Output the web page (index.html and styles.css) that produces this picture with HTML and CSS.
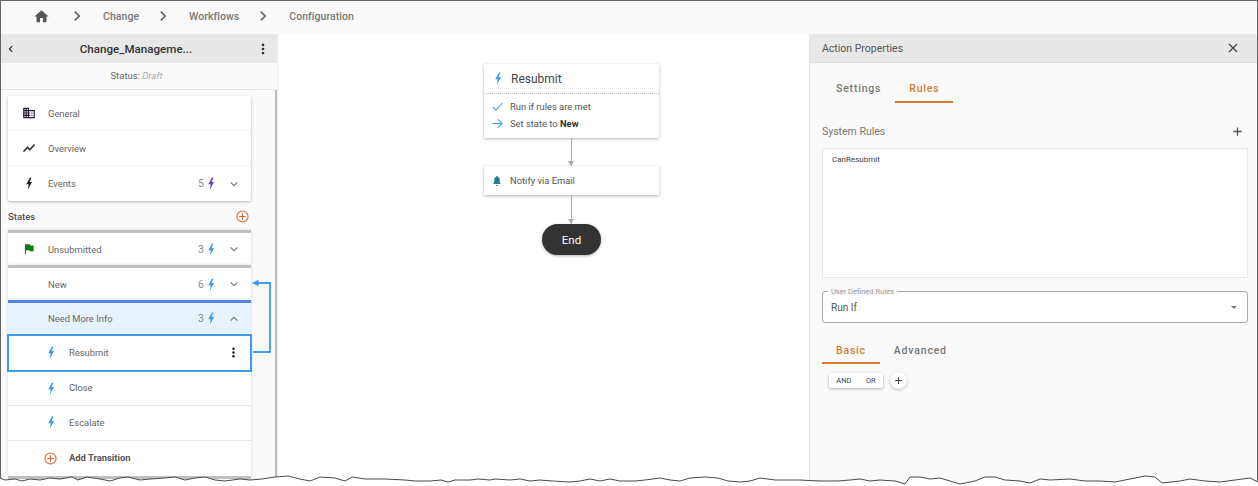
FILE: index.html
```html
<!DOCTYPE html>
<html lang="en">
<head>
<meta charset="utf-8">
<title>Workflow Configuration</title>
<link rel="stylesheet" href="styles.css">
</head>
<body>
<svg class="defs" width="0" height="0" aria-hidden="true">
  <symbol id="i-bolt" viewBox="0 0 12 20"><path d="M7.500 .8 1.800 11.200h3.700L4.300 19.500 10.600 7.800H6.900L9.800 .8z"/></symbol>
  <symbol id="i-home" viewBox="0 0 24 24"><path d="M10 20v-6h4v6h5v-8h3L12 3 2 12h3v8z"/></symbol>
  <symbol id="i-chev-r" viewBox="0 0 24 24"><path d="M8.600 5.400 7 7l5 5-5 5 1.600 1.600L15.200 12z"/></symbol>
  <symbol id="i-more" viewBox="0 0 24 24"><circle cx="12" cy="5" r="2.300"/><circle cx="12" cy="12" r="2.300"/><circle cx="12" cy="19" r="2.300"/></symbol>
  <symbol id="i-down" viewBox="0 0 12 12"><path d="M2 4l4 4 4-4" fill="none" stroke="currentColor" stroke-width="1.300"/></symbol>
  <symbol id="i-up" viewBox="0 0 12 12"><path d="M2 8l4-4 4 4" fill="none" stroke="currentColor" stroke-width="1.300"/></symbol>
  <symbol id="i-add" viewBox="0 0 14 14"><circle cx="7" cy="7" r="6" fill="none" stroke="currentColor" stroke-width="1.100"/><path d="M7 3.500v7M3.500 7h7" stroke="currentColor" stroke-width="1.100"/></symbol>
  <symbol id="i-plus" viewBox="0 0 12 12"><path d="M6 1.500v9M1.500 6h9" stroke="currentColor" stroke-width="1.400"/></symbol>
</svg>

<div class="frame">
  <nav class="crumbs">
    <svg class="home"><use href="#i-home"/></svg>
    <svg class="crumb-sep"><use href="#i-chev-r"/></svg>
    <span class="crumb">Change</span>
    <svg class="crumb-sep"><use href="#i-chev-r"/></svg>
    <span class="crumb">Workflows</span>
    <svg class="crumb-sep"><use href="#i-chev-r"/></svg>
    <span class="crumb">Configuration</span>
  </nav>

  <div class="main">
    <aside class="side">
      <header class="side-head">
        <svg class="back" viewBox="0 0 12 12"><path d="M7.500 2.500 4 6l3.500 3.500" fill="none" stroke="#333" stroke-width="1.500"/></svg>
        <span class="side-title">Change_Manageme...</span>
        <svg class="side-more"><use href="#i-more"/></svg>
      </header>
      <div class="status">Status:&nbsp;<em>Draft</em></div>
      <div class="side-body">
        <section class="card">
          <div class="row">
            <svg class="lead dark" viewBox="0 0 24 24"><path fill="#2a1a3a" d="M12 7V3H2v18h20V7H12zM6 19H4v-2h2v2zm0-4H4v-2h2v2zm0-4H4V9h2v2zm0-4H4V5h2v2zm4 12H8v-2h2v2zm0-4H8v-2h2v2zm0-4H8V9h2v2zm0-4H8V5h2v2zm10 12h-8v-2h2v-2h-2v-2h2v-2h-2V9h8v10zm-2-8h-2v2h2v-2zm0 4h-2v2h2v-2z"/></svg>
            <span class="label">General</span>
          </div>
          <div class="row">
            <svg class="lead dark trend" viewBox="0 0 24 24"><path d="M3.500 18.490l6-6.010 4 4L22 6.920l-1.410-1.410-7.090 7.970-4-4L2 16.990z"/></svg>
            <span class="label">Overview</span>
          </div>
          <div class="row">
            <svg class="lead bolt-lead dark"><use href="#i-bolt"/></svg>
            <span class="label">Events</span>
            <span class="count">5</span><svg class="bolt purple"><use href="#i-bolt"/></svg>
            <svg class="chev"><use href="#i-down"/></svg>
          </div>
        </section>

        <div class="states-head">
          <span>States</span>
          <svg class="add-state"><use href="#i-add"/></svg>
        </div>

        <section class="card state-card">
          <div class="row">
            <svg class="lead" viewBox="0 0 24 24"><path fill="#0b7d16" d="M14.400 6 14 4H5v17h2v-7h5.600l.4 2h7V6z"/></svg>
            <span class="label">Unsubmitted</span>
            <span class="count">3</span><svg class="bolt"><use href="#i-bolt"/></svg>
            <svg class="chev"><use href="#i-down"/></svg>
          </div>
        </section>
        <section class="card state-card">
          <div class="row">
            <span class="lead"></span>
            <span class="label">New</span>
            <span class="count">6</span><svg class="bolt"><use href="#i-bolt"/></svg>
            <svg class="chev"><use href="#i-down"/></svg>
          </div>
        </section>
        <section class="card state-card open">
          <div class="row open-row">
            <span class="lead"></span>
            <span class="label">Need More Info</span>
            <span class="count">3</span><svg class="bolt"><use href="#i-bolt"/></svg>
            <svg class="chev"><use href="#i-up"/></svg>
          </div>
          <div class="row sub selected">
            <svg class="bolt sub-bolt"><use href="#i-bolt"/></svg>
            <span class="label">Resubmit</span>
            <svg class="row-more"><use href="#i-more"/></svg>
          </div>
          <div class="row sub">
            <svg class="bolt sub-bolt"><use href="#i-bolt"/></svg>
            <span class="label">Close</span>
          </div>
          <div class="row sub">
            <svg class="bolt sub-bolt"><use href="#i-bolt"/></svg>
            <span class="label">Escalate</span>
          </div>
          <div class="row sub">
            <svg class="add-transition"><use href="#i-add"/></svg>
            <span class="label strong">Add Transition</span>
          </div>
        </section>
        <div class="card-end"></div>
      </div>
      <svg class="link-arrow" viewBox="0 0 20 76"><path d="M1 73h17V4H4" fill="none" stroke="#3d9be9" stroke-width="1.800"/><path d="M0 4 6.500 .8v6.400z" fill="#3d9be9"/></svg>
    </aside>

    <div class="canvas">
      <div class="flow">
        <div class="node trigger">
          <div class="node-title">
            <svg class="bolt title-bolt"><use href="#i-bolt"/></svg>
            <span>Resubmit</span>
          </div>
          <div class="node-lines">
            <div class="node-line">
              <svg class="line-icon" viewBox="0 0 12 12"><path d="M1 6.500 4.200 10 11.400 2.200" fill="none" stroke="#3d9be9" stroke-width="1.100"/></svg>
              <span>Run if rules are met</span>
            </div>
            <div class="node-line">
              <svg class="line-icon" viewBox="0 0 12 12"><path d="M.8 6h10M6.400 1.400 11 6l-4.600 4.600" fill="none" stroke="#3d9be9" stroke-width="1.100"/></svg>
              <span>Set state to <b>New</b></span>
            </div>
          </div>
        </div>
        <div class="wire"></div>
        <div class="node notify">
          <svg class="bell" viewBox="0 0 24 24"><path fill="#1f7f8c" d="M12 23c1.100 0 2-.9 2-2h-4c0 1.100.89 2 2 2zm7-6-1.500-2v-4c0-3.070-1.140-5.640-4-6.320V4c0-.83-.67-1.500-1.500-1.500s-1.500.67-1.500 1.500v.68C7.630 5.360 6.500 7.920 6.500 11v4L5 17v2h14z"/></svg>
          <span>Notify via Email</span>
        </div>
        <div class="wire"></div>
        <div class="end">End</div>
      </div>
    </div>

    <aside class="props">
      <header class="props-head">
        <span>Action Properties</span>
        <svg class="close" viewBox="0 0 12 12"><path d="M2 2l8 8M10 2l-8 8" stroke="#444" stroke-width="1.300"/></svg>
      </header>
      <div class="props-body">
        <div class="tabs">
          <span class="tab">Settings</span>
          <span class="tab active">Rules</span>
        </div>
        <div class="sys-head">
          <span>System Rules</span>
          <svg class="sys-add"><use href="#i-plus"/></svg>
        </div>
        <div class="rules-box">CanResubmit</div>
        <div class="select">
          <span class="select-label">User Defined Rules</span>
          <span class="select-value">Run If</span>
          <span class="caret"></span>
        </div>
        <div class="tabs tabs-basic">
          <span class="tab active">Basic</span>
          <span class="tab">Advanced</span>
        </div>
        <div class="logic">
          <div class="toggle"><span>AND</span><span>OR</span></div>
          <div class="round-add"><svg><use href="#i-plus"/></svg></div>
        </div>
      </div>
    </aside>
  </div>
</div>

<svg class="torn" viewBox="0 0 1258 486" aria-hidden="true">
  <path class="torn-fill" d="M0 478 5 480 15 479 22 481 30 479 40 480 50 478 60 479 72 477 78 480 87 477 100 479 110 481 120 478 128 477 140 480 150 479 165 478 175 477 185 480 195 478 205 477 215 480 225 481 240 479 250 480 262 479 275 477 288 476 300 479 310 481 320 477 335 478 345 481 352 477 365 479 385 479 405 480 415 481 430 481 441 480 448 482 455 480 470 480 478 479 490 480 495 479 510 480 520 479 530 481 540 480 552 481 570 482 580 481 590 479 600 481 610 479 620 481 635 481 645 480 660 478 670 480 680 481 690 478 705 477 718 478 728 481 740 482 750 481 760 478 775 480 800 480 820 481 838 481 850 480 860 479 870 481 880 480 895 481 905 484 910 477 920 477 930 479 940 478 950 481 960 484 975 481 985 477 995 477 1005 480 1020 481 1030 483 1040 479 1050 480 1070 479 1085 481 1100 481 1115 482 1130 479 1145 476 1155 477 1162 483 1180 481 1190 479 1205 481 1220 482 1235 480 1250 478 1258 482V486H0z"/>
  <path class="torn-line" d="M0 478 5 480 15 479 22 481 30 479 40 480 50 478 60 479 72 477 78 480 87 477 100 479 110 481 120 478 128 477 140 480 150 479 165 478 175 477 185 480 195 478 205 477 215 480 225 481 240 479 250 480 262 479 275 477 288 476 300 479 310 481 320 477 335 478 345 481 352 477 365 479 385 479 405 480 415 481 430 481 441 480 448 482 455 480 470 480 478 479 490 480 495 479 510 480 520 479 530 481 540 480 552 481 570 482 580 481 590 479 600 481 610 479 620 481 635 481 645 480 660 478 670 480 680 481 690 478 705 477 718 478 728 481 740 482 750 481 760 478 775 480 800 480 820 481 838 481 850 480 860 479 870 481 880 480 895 481 905 484 910 477 920 477 930 479 940 478 950 481 960 484 975 481 985 477 995 477 1005 480 1020 481 1030 483 1040 479 1050 480 1070 479 1085 481 1100 481 1115 482 1130 479 1145 476 1155 477 1162 483 1180 481 1190 479 1205 481 1220 482 1235 480 1250 478 1258 482"/>
</svg>
</body>
</html>
```
FILE: styles.css
```css
* { box-sizing: border-box; }
html, body { margin: 0; height: 486px; overflow: hidden; background: #fff; }
body { font-family: Roboto, "Liberation Sans", sans-serif; color: #666; position: relative; }
.defs { position: absolute; }
svg { display: block; flex: none; fill: currentColor; }

.frame {
  height: 486px; display: flex; flex-direction: column;
  border: 1px solid #666; border-bottom: 0; background: #fff;
}

.crumbs {
  height: 33px; flex: none; display: flex; align-items: center;
  background: #fafafa; padding: 0 0 3px 32px; color: #777;
}
.home { width: 17px; height: 17px; color: #555; }
.crumb-sep { width: 18px; height: 18px; color: #666; margin: 0 16px; }
.crumb-sep:nth-of-type(2) { margin-left: 19px; }
.crumb { font-size: 10.500px; font-weight: 500; letter-spacing: .05px; }

.main { flex: 1; display: flex; min-height: 0; }

.side {
  width: 276px; flex: none; position: relative;
  background: #fafafa; display: flex; flex-direction: column;
}
.side-head {
  height: 29px; flex: none; background: #e8e8e8; display: flex; align-items: center;
  padding: 0 5px;
}
.back { width: 10px; height: 10px; }
.side-title { flex: 1; text-align: center; color: #333; font-size: 11.600px; font-weight: 500; }
.side-more { width: 14px; height: 14px; color: #333; margin-right: 2px; }
.status {
  height: 27px; flex: none; display: flex; align-items: center; justify-content: center;
  font-size: 9.500px; border-bottom: 1px solid #e5e5e5; color: #666; padding: 0 5px 1px 0;
}
.status em { color: #aaa; }
.side-body { flex: 1; padding: 6px 0 0 7px; border-right: 2px solid #bdbdbd; }

.card { width: 243px; background: #fff; box-shadow: 0 1px 3px rgba(0,0,0,.28); border-radius: 2px; }
.row { height: 35px; display: flex; align-items: center; padding: 0 12px 0 14px; font-size: 9.400px; border-bottom: 1px solid #f3f3f3; }
.card > .row:last-child { border-bottom: 0; }
.lead { width: 14px; height: 14px; margin-right: 12px; }
.trend { stroke: currentColor; stroke-width: .8px; }
.bolt-lead { height: 13px; }
.dark { color: #222; }
.label { flex: 1; color: #666; }
.strong { font-weight: 700; color: #555; }
.count { color: #888; font-size: 10.500px; margin-right: 3px; }
.bolt { width: 8px; height: 13px; color: #3d9be9; margin-right: 14px; }
.purple { color: #6a3fc0; }
.chev { width: 10px; height: 10px; color: #777; }

.states-head {
  width: 243px; height: 29px; display: flex; align-items: center; justify-content: space-between;
  font-size: 9.500px; font-weight: 500; color: #555; padding: 1px 2px 0 0;
}
.add-state { width: 13px; height: 13px; color: #e0622d; }

.state-card { border-top: 3px solid #c0c0c0; border-radius: 0; box-shadow: 0 0 3px rgba(0,0,0,.15); }
.state-card .row { height: 32px; border-bottom: 0; }
.state-card.open { border-top-color: #4f87e0; }
.state-card .open-row { height: 31px; background: #e8f2fd; }
.state-card .sub { height: 35px; padding-left: 39px; padding-bottom: 2px; border-bottom: 1px solid #e6e6e6; }
.state-card .sub:last-child { border-bottom: 0; }
.state-card .selected {
  height: 38px; margin: 0 -1px; padding-left: 38px; padding-right: 10px;
  border: 2px solid #3d9be9;
}
.state-card .selected + .sub { height: 34px; }
.sub-bolt { margin-right: 14px; margin-top: 1px; }
.row-more { width: 13px; height: 13px; color: #222; }
.add-transition { width: 13px; height: 13px; color: #e0622d; margin: 1px 12px 0 -3px; }
.card-end { width: 243px; height: 3px; background: #c0c0c0; }

.link-arrow { position: absolute; left: 251px; top: 245px; width: 20px; height: 76px; fill: none; }

.canvas { flex: 1; background: #fff; border-left: 1px solid #eee; min-width: 0; }
.flow { width: 175px; margin-left: 206px; display: flex; flex-direction: column; align-items: center; padding-top: 30px; }
.node { width: 175px; background: #fff; box-shadow: 0 1px 3px rgba(0,0,0,.3); font-size: 9.400px; color: #555; }
.node-title { height: 30px; display: flex; align-items: center; padding-left: 10px; font-size: 12px; border-bottom: 1px dotted #bbb; color: #444; }
.title-bolt { margin-right: 9px; }
.node-lines { padding: 4px 0 6px; }
.node-line { height: 17px; display: flex; align-items: center; padding-left: 8px; font-size: 9.400px; }
.line-icon { width: 11px; height: 11px; margin-right: 7px; }
.node-line b { color: #333; }
.wire { width: 1px; height: 28px; background: #aaa; position: relative; }
.notify + .wire { height: 29px; }
.wire::after {
  content: ""; position: absolute; left: -3px; bottom: 0;
  border: 3.500px solid transparent; border-top: 5px solid #aaa; border-bottom: 0;
}
.notify { height: 29px; display: flex; align-items: center; padding-left: 7px; }
.bell { width: 12px; height: 13px; margin-right: 7px; }
.end {
  width: 59px; height: 31px; border-radius: 16px; background: #333; color: #fff;
  display: flex; align-items: center; justify-content: center; font-size: 11.500px;
  box-shadow: 0 1px 3px rgba(0,0,0,.3);
}

.props { width: 448px; flex: none; background: #fafafa; border-left: 1px solid #e5e5e5; display: flex; flex-direction: column; }
.props-head {
  height: 29px; flex: none; display: flex; align-items: center; justify-content: space-between;
  background: #e8e8e8; border-bottom: 1px solid #ddd; padding: 0 18px 0 12px; font-size: 10.500px; color: #555;
}
.close { width: 12px; height: 12px; }
.props-body { flex: 1; padding: 9px 9px 0 12px; }
.tabs { display: flex; height: 31px; }
.tab { padding: 3px 14px 0; display: flex; align-items: center; font-size: 10.500px; font-weight: 500; letter-spacing: .8px; color: #777; border-bottom: 2px solid transparent; }
.tab.active { color: #d57a2e; border-bottom-color: #d57a2e; }
.sys-head { display: flex; align-items: center; justify-content: space-between; margin-top: 19px; height: 18px; font-size: 10.500px; color: #777; padding-right: 5px; }
.sys-add { width: 11px; height: 11px; color: #555; }
.rules-box { height: 130px; margin-top: 8px; background: #fff; border: 1px solid #e8e8e8; padding: 6px 9px; font-size: 8px; color: #444; }
.select { position: relative; height: 32px; margin-top: 13px; background: #fff; border: 1px solid #aaa; border-radius: 3px; display: flex; align-items: center; justify-content: space-between; padding: 0 10px 0 8px; font-size: 10px; color: #555; }
.select-label { position: absolute; left: 5px; top: -5px; background: #fafafa; padding: 0 3px; font-size: 7.500px; line-height: 9px; color: #999; }
.caret { border: 3px solid transparent; border-top: 3px solid #777; border-bottom: 0; }
.tabs-basic { margin-top: 13px; height: 28px; }
.logic { display: flex; align-items: center; gap: 7px; margin: 8px 0 0 7px; }
.toggle { width: 54px; height: 15px; background: #fff; box-shadow: 0 1px 3px rgba(0,0,0,.3); border-radius: 2px; display: flex; align-items: center; justify-content: space-around; font-size: 7.500px; color: #444; }
.round-add { width: 17px; height: 17px; border-radius: 50%; background: #fff; box-shadow: 0 1px 3px rgba(0,0,0,.25); display: flex; align-items: center; justify-content: center; color: #444; }
.round-add svg { width: 9px; height: 9px; }

.torn { position: absolute; left: 0; top: 0; width: 1258px; height: 486px; pointer-events: none; }
.torn-fill { fill: #fff; stroke: none; }
.torn-line { fill: none; stroke: #4a4a4a; stroke-width: 1; }
```
